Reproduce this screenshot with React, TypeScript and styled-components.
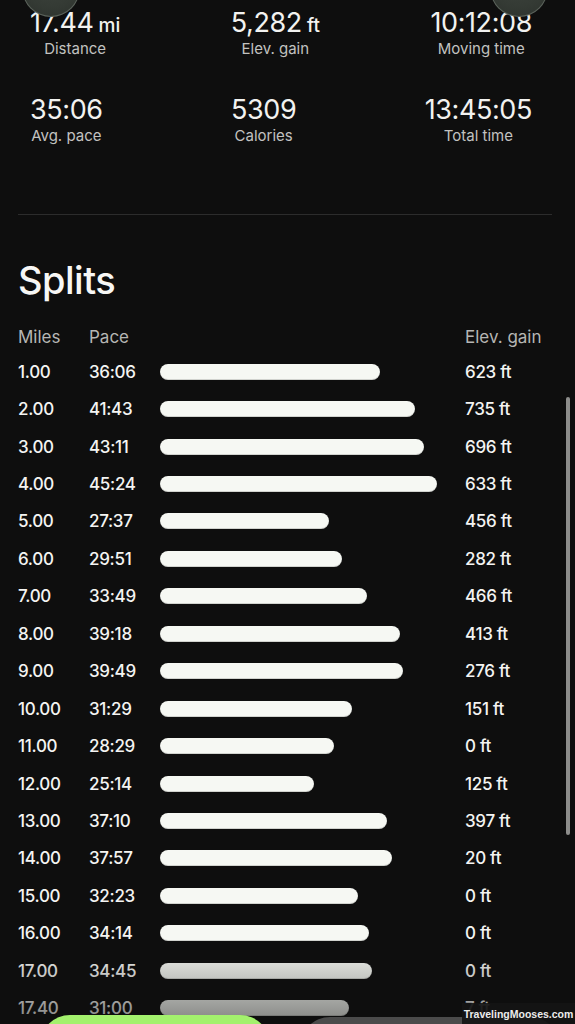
import React from "react";
import styled, { createGlobalStyle } from "styled-components";

const GlobalStyle = createGlobalStyle`
  html, body {
    margin: 0;
    padding: 0;
    background: #0e0e0e;
  }
  body {
    font-family: Inter, "Noto Sans", sans-serif;
    color: #f3f3f1;
    overflow: hidden;
  }
`;

const Screen = styled.div`
  position: relative;
  width: 575px;
  height: 1024px;
  overflow: hidden;
  background: #0e0e0e;
`;

const StatsRow = styled.div<{ $top: number }>`
  display: flex;
  justify-content: space-between;
  padding: 0 43px 0 30px;
  margin-top: ${(p) => p.$top}px;
`;

const Stat = styled.div`
  display: flex;
  flex-direction: column;
  align-items: center;
`;

const StatValue = styled.div`
  height: 30px;
  font-size: 27px;
  line-height: 30px;
  font-weight: 400;
  letter-spacing: -0.4px;
  color: #f2f2f0;
  white-space: nowrap;
`;

const Unit = styled.span`
  font-size: 19px;
  line-height: 1;
  font-weight: 500;
  margin-left: 5px;
  letter-spacing: 0;
`;

const StatLabel = styled.div`
  margin-top: 2px;
  font-size: 15px;
  line-height: 18px;
  color: #c2c2c0;
  white-space: nowrap;
`;

const Divider = styled.hr`
  margin: 69px 23px 0 18px;
  border: 0;
  height: 1px;
  background: #2c2c2c;
`;

const Title = styled.h2`
  margin: 43px 0 0 18px;
  font-size: 38px;
  line-height: 44px;
  font-weight: 500;
  letter-spacing: -0.5px;
  color: #f7f7f5;
`;

const SplitGrid = styled.div`
  margin-top: 19px;
  display: grid;
  grid-template-columns: 71px 71px 305px 1fr;
  grid-template-rows: 32px;
  grid-auto-rows: 37.45px;
  padding-left: 18px;
  align-items: center;
`;

const HeadCell = styled.div`
  font-size: 17px;
  color: #b6b6b4;
  white-space: nowrap;
`;

const Cell = styled.div`
  font-size: 17px;
  font-weight: 500;
  letter-spacing: -0.3px;
  color: #f4f4f2;
  white-space: nowrap;
`;

const Bar = styled.div`
  height: 16px;
  border-radius: 8px;
  background: #f6f8f3;
  box-shadow: inset 0 -1px 0 rgba(0, 0, 0, 0.15);
`;

const Knob = styled.div<{ $side: "left" | "right" }>`
  position: absolute;
  top: -41px;
  left: ${(p) => (p.$side === "left" ? 22 : 490)}px;
  width: 58px;
  height: 58px;
  border-radius: 50%;
  background: radial-gradient(circle at 50% 35%, #3e443e 0%, #343a34 60%, #2b302b 100%);
  box-shadow: inset 0 0 0 1px rgba(170, 180, 170, 0.35);
`;

const ScrollThumb = styled.div`
  position: absolute;
  top: 397px;
  left: 566px;
  width: 4px;
  height: 438px;
  border-radius: 2px;
  background: #8d8d8b;
`;

const Fade = styled.div`
  position: absolute;
  left: 0;
  right: 0;
  bottom: 0;
  height: 80px;
  background: linear-gradient(to bottom, rgba(14, 14, 14, 0) 0%, rgba(14, 14, 14, 0.5) 100%);
  pointer-events: none;
`;

const ActionButton = styled.div<{ $primary?: boolean }>`
  position: absolute;
  top: ${(p) => (p.$primary ? 1015 : 1017)}px;
  left: ${(p) => (p.$primary ? 40 : 300)}px;
  width: ${(p) => (p.$primary ? 230 : 260)}px;
  height: 60px;
  border-radius: 30px;
  background: ${(p) => (p.$primary ? "#a3f16d" : "#4b4b4b")};
`;

const Watermark = styled.div`
  position: absolute;
  right: 0;
  bottom: 0;
  width: 113px;
  height: 21px;
  display: flex;
  align-items: center;
  justify-content: center;
  background: rgba(20, 20, 20, 0.9);
  font-family: "Liberation Sans", Arial, sans-serif;
  font-weight: 700;
  font-size: 10.5px;
  color: #ececec;
`;

type Split = { mile: string; pace: string; gain: number };

const splits: Split[] = [
  { mile: "1.00", pace: "36:06", gain: 623 },
  { mile: "2.00", pace: "41:43", gain: 735 },
  { mile: "3.00", pace: "43:11", gain: 696 },
  { mile: "4.00", pace: "45:24", gain: 633 },
  { mile: "5.00", pace: "27:37", gain: 456 },
  { mile: "6.00", pace: "29:51", gain: 282 },
  { mile: "7.00", pace: "33:49", gain: 466 },
  { mile: "8.00", pace: "39:18", gain: 413 },
  { mile: "9.00", pace: "39:49", gain: 276 },
  { mile: "10.00", pace: "31:29", gain: 151 },
  { mile: "11.00", pace: "28:29", gain: 0 },
  { mile: "12.00", pace: "25:14", gain: 125 },
  { mile: "13.00", pace: "37:10", gain: 397 },
  { mile: "14.00", pace: "37:57", gain: 20 },
  { mile: "15.00", pace: "32:23", gain: 0 },
  { mile: "16.00", pace: "34:14", gain: 0 },
  { mile: "17.00", pace: "34:45", gain: 0 },
  { mile: "17.40", pace: "31:00", gain: 7 },
];

// bar length follows the split pace
const paceWidth = (pace: string): number => {
  const [m, s] = pace.split(":").map(Number);
  return (m * 60 + s) * 0.1018;
};

const App = () => {
  return (
    <Screen>
      <GlobalStyle />
      <StatsRow $top={8}>
        <Stat>
          <StatValue>
            17.44<Unit>mi</Unit>
          </StatValue>
          <StatLabel>Distance</StatLabel>
        </Stat>
        <Stat>
          <StatValue>
            5,282<Unit>ft</Unit>
          </StatValue>
          <StatLabel>Elev. gain</StatLabel>
        </Stat>
        <Stat>
          <StatValue>10:12:08</StatValue>
          <StatLabel>Moving time</StatLabel>
        </Stat>
      </StatsRow>
      <StatsRow $top={37}>
        <Stat>
          <StatValue>35:06</StatValue>
          <StatLabel>Avg. pace</StatLabel>
        </Stat>
        <Stat>
          <StatValue>5309</StatValue>
          <StatLabel>Calories</StatLabel>
        </Stat>
        <Stat>
          <StatValue>13:45:05</StatValue>
          <StatLabel>Total time</StatLabel>
        </Stat>
      </StatsRow>

      <Divider />
      <Title>Splits</Title>

      <SplitGrid>
        <HeadCell>Miles</HeadCell>
        <HeadCell>Pace</HeadCell>
        <div />
        <HeadCell>Elev. gain</HeadCell>
        {splits.map((s) => (
          <React.Fragment key={s.mile}>
            <Cell>{s.mile}</Cell>
            <Cell>{s.pace}</Cell>
            <Bar style={{ width: paceWidth(s.pace) }} />
            <Cell>{s.gain} ft</Cell>
          </React.Fragment>
        ))}
      </SplitGrid>

      <Knob $side="left" />
      <Knob $side="right" />
      <ScrollThumb />
      <Fade />
      <ActionButton $primary />
      <ActionButton />
      <Watermark>TravelingMooses.com</Watermark>
    </Screen>
  );
};

export default App;
